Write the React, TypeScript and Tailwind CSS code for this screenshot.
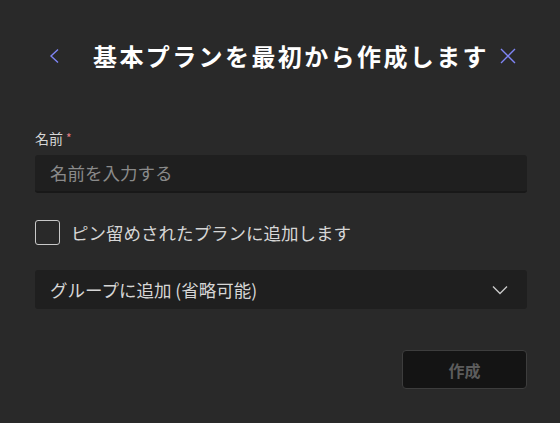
import React from "react";

const font = { fontFamily: '"Noto Sans CJK JP", "Noto Sans", sans-serif' };

export default function App() {
  return (
    <div
      className="w-[560px] h-[423px] bg-[#292929] pl-[35px] pr-[33px] pt-[38px] overflow-hidden"
      style={font}
    >
      <div className="flex items-center h-[36px]">
        <button className="w-[10px] h-[16px] ml-[14px] flex items-center justify-center">
          <svg width="10" height="16" viewBox="0 0 10 16" fill="none">
            <path d="M9 1.5 L2 8 L9 14.5" stroke="#7f85f5" strokeWidth="1.4" />
          </svg>
        </button>
        <h1 className="ml-[34px] text-[24px] leading-[36px] font-bold text-white tracking-[2.4px] whitespace-nowrap">
          基本プランを最初から作成します
        </h1>
        <div className="flex-1" />
        <button className="w-[16px] h-[16px] mr-[11px] flex items-center justify-center">
          <svg width="16" height="16" viewBox="0 0 16 16" fill="none">
            <path d="M1 1 L15 15 M15 1 L1 15" stroke="#7f85f5" strokeWidth="1.4" />
          </svg>
        </button>
      </div>

      <div className="mt-[54px] flex items-center text-[14px] leading-[20px] text-[#d6d6d6]">
        <span>名前</span>
        <span className="ml-[3px] text-[#e37d80] text-[12px]">*</span>
      </div>

      <div className="mt-[7px] h-[38px] bg-[#1f1f1f] border-b-2 border-[#181818] rounded-[3px] flex items-center px-[15px]">
        <span className="text-[17.5px] text-[#8a8a8a] leading-none">名前を入力する</span>
      </div>

      <div className="mt-[27px] flex items-center">
        <div className="w-[25px] h-[25px] border border-[#c8c8c8] rounded-[3px]" />
        <span className="ml-[11px] text-[17.5px] text-[#d6d6d6] leading-none">
          ピン留めされたプランに追加します
        </span>
      </div>

      <div className="mt-[25px] h-[39px] bg-[#1f1f1f] rounded-[3px] flex items-center px-[15px]">
        <span className="text-[17.5px] text-[#d6d6d6] leading-none">グループに追加 (省略可能)</span>
        <div className="flex-1" />
        <svg width="16" height="10" viewBox="0 0 16 10" fill="none" className="mr-[4px]">
          <path d="M1 1.5 L8 8.5 L15 1.5" stroke="#c8c8c8" strokeWidth="1.4" />
        </svg>
      </div>

      <div className="mt-[41px] flex justify-end">
        <button className="w-[125px] h-[39px] bg-[#141414] border border-[#3d3d3d] rounded-[4px] text-[16px] font-bold text-[#5c5c5c]">
          作成
        </button>
      </div>
    </div>
  );
}
